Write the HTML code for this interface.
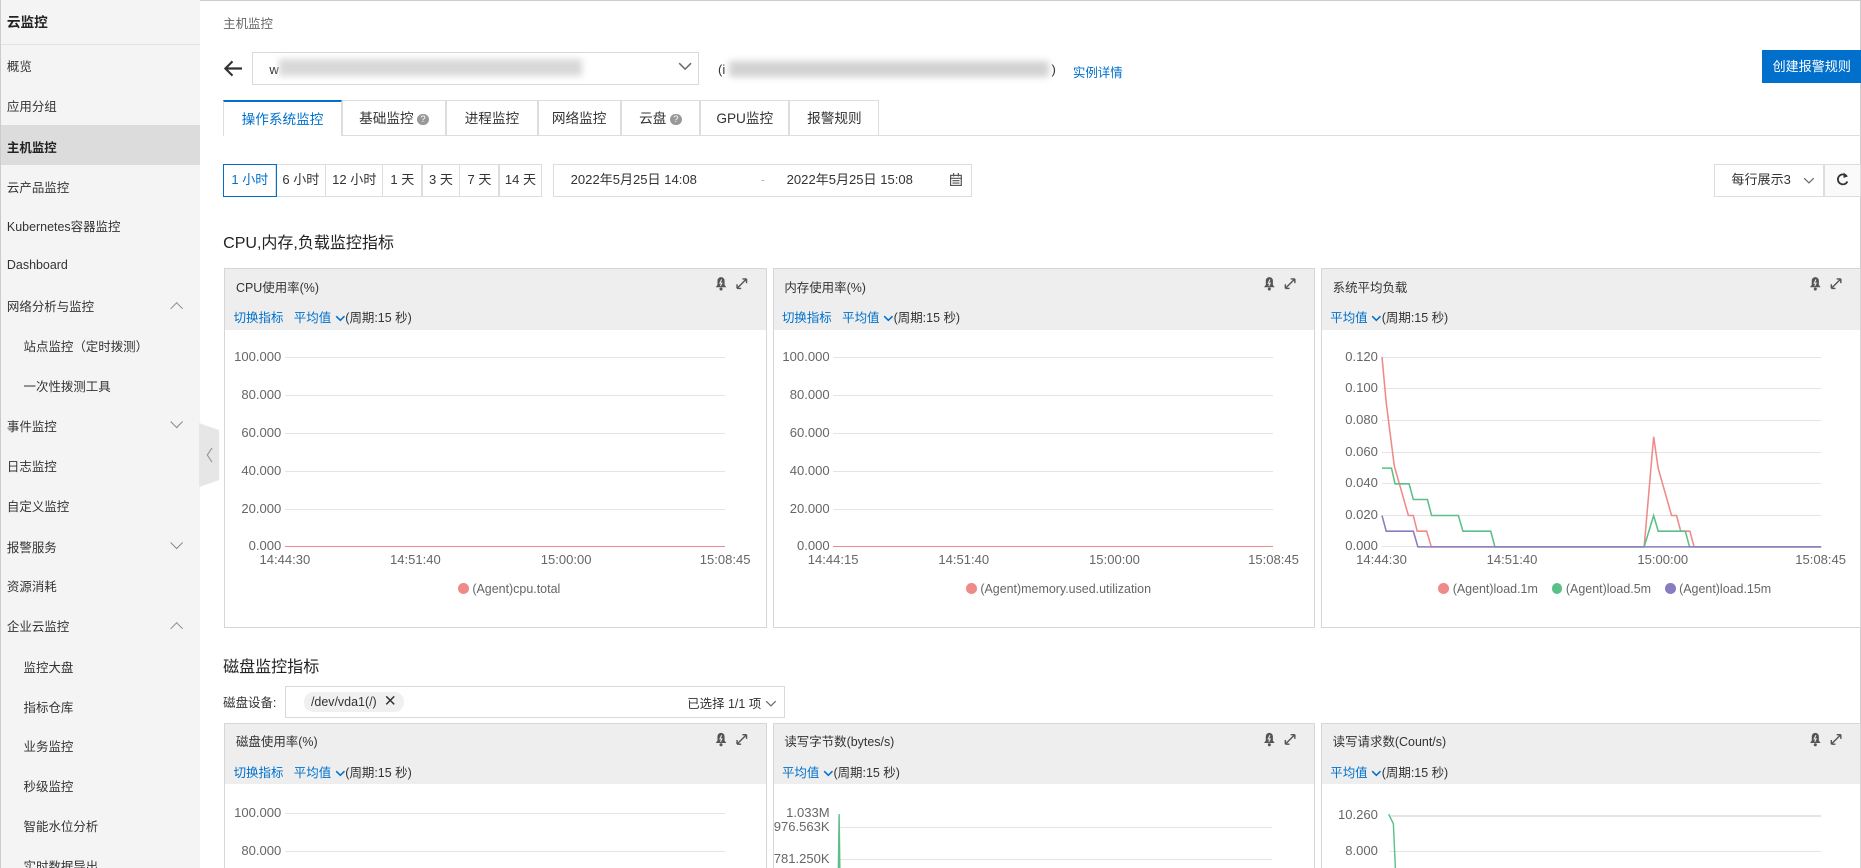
<!DOCTYPE html>
<html><head><meta charset="utf-8">
<style>
html{zoom:1.18686;overflow:hidden}
body{margin:0;background:#fff;font-family:"Liberation Sans","Noto Sans CJK SC",sans-serif;font-size:11px;color:#333}
#w{position:relative;width:1568px;height:731px;overflow:hidden}
.a{position:absolute;white-space:nowrap}
.side{position:absolute;left:0;top:0;width:168px;height:760px;background:#f4f4f4;border-left:1px solid #ccc}
.si{position:absolute;left:5px;font-size:10.5px;color:#333}
.sub{left:19px}
.chev{position:absolute;left:144px;width:7px;height:7px;border-left:1px solid #888;border-top:1px solid #888}
.up{transform:rotate(45deg)}
.dn{transform:rotate(225deg)}
.tab{position:absolute;top:84px;height:30px;border:1px solid #ddd;border-bottom:none;background:#fff;line-height:30px;text-align:center;font-size:11.5px;color:#333;box-sizing:border-box}
.q{display:inline-block;width:10px;height:10px;border-radius:50%;background:#999;color:#fff;font-size:8px;line-height:10px;text-align:center;vertical-align:1px;margin-left:3px}
.tb{position:absolute;top:138px;height:28px;border:1px solid #ddd;line-height:26px;text-align:center;font-size:11px;box-sizing:border-box;color:#333}
.panel{position:absolute;border:1px solid #d6d6d6;box-sizing:border-box;background:#fff}
.ph{position:absolute;left:0;top:0;right:0;height:51px;background:#eee}
.pt{position:absolute;left:9px;top:7px;font-size:10.5px;color:#333}
.pl{position:absolute;left:7px;top:33px;font-size:10.5px;color:#0070cc}
.pl span{color:#333}
.g{position:absolute;height:1px;background:#e4e4e4}
.yl{position:absolute;font-size:11px;color:#666;text-align:right;width:60px}
.xl{position:absolute;font-size:11px;color:#666;transform:translateX(-50%)}
.leg{position:absolute;font-size:10.5px;color:#666}
.dot{display:inline-block;width:9px;height:9px;border-radius:50%;vertical-align:-1px;margin-right:3px}
</style></head><body><div id="w">
<div class="a" style="left:0;top:0;width:1568px;height:1px;background:#ccc"></div>
<div class="a" style="left:1567px;top:0;width:1px;height:760px;background:#ccc"></div>
<div class="side">
<div class="si" style="top:9px;font-weight:bold;font-size:11.5px;color:#222">云监控</div>
<div class="a" style="left:0;top:37px;width:168px;height:1px;background:#e2e2e2"></div>
<div class="si" style="top:48px">概览</div>
<div class="si" style="top:82px">应用分组</div>
<div class="a" style="left:0;top:105px;width:168px;height:34px;background:#dcdcdc"></div>
<div class="si" style="top:116px;font-weight:bold;color:#222">主机监控</div>
<div class="si" style="top:150px">云产品监控</div>
<div class="si" style="top:183px">Kubernetes容器监控</div>
<div class="si" style="top:217px">Dashboard</div>
<div class="si" style="top:250px">网络分析与监控</div><div class="chev up" style="top:256px"></div>
<div class="si sub" style="top:284px">站点监控（定时拨测）</div>
<div class="si sub" style="top:318px">一次性拨测工具</div>
<div class="si" style="top:351px">事件监控</div><div class="chev dn" style="top:351px"></div>
<div class="si" style="top:385px">日志监控</div>
<div class="si" style="top:419px">自定义监控</div>
<div class="si" style="top:453px">报警服务</div><div class="chev dn" style="top:453px"></div>
<div class="si" style="top:486px">资源消耗</div>
<div class="si" style="top:520px">企业云监控</div><div class="chev up" style="top:526px"></div>
<div class="si sub" style="top:554px">监控大盘</div>
<div class="si sub" style="top:588px">指标仓库</div>
<div class="si sub" style="top:621px">业务监控</div>
<div class="si sub" style="top:655px">秒级监控</div>
<div class="si sub" style="top:688px">智能水位分析</div>
<div class="si sub" style="top:722px">实时数据导出</div>
</div>
<svg class="a" style="left:168px;top:356px" width="17" height="54"><polygon points="0,0 17,6 17,48 0,54" fill="#e6e6e6"/><polyline points="11,21 7,27 11,33" fill="none" stroke="#999" stroke-width="1"/></svg>

<div class="a" style="left:188px;top:12px;color:#666;font-size:10.5px">主机监控</div>
<svg class="a" style="left:188px;top:50px" width="18" height="16"><path d="M16 8H3M8 2L2 8l6 6" fill="none" stroke="#333" stroke-width="1.8"/></svg>
<div class="a" style="left:212px;top:44px;width:377px;height:28px;border:1px solid #d9d9d9;box-sizing:border-box"></div>
<div class="a" style="left:227px;top:52px;font-size:11px">w</div>
<div class="a" style="left:235px;top:50px;width:255px;height:14px;background:#d8d8d8;filter:blur(3px)"></div>
<svg class="a" style="left:571px;top:52px" width="12" height="8"><path d="M1 1l5 5 5-5" fill="none" stroke="#666" stroke-width="1.2"/></svg>
<div class="a" style="left:605px;top:52px;font-size:11px">(i</div>
<div class="a" style="left:614px;top:51px;width:270px;height:14px;background:#d2d2d2;filter:blur(3px)"></div>
<div class="a" style="left:886px;top:52px;font-size:11px">)</div>
<div class="a" style="left:904px;top:53px;font-size:10.5px;color:#0070cc">实例详情</div>
<div class="a" style="left:1485px;top:42px;width:83px;height:28px;background:#0070cc;color:#fff;font-size:11px;line-height:28px;text-align:center">创建报警规则</div>

<div class="a" style="left:188px;top:114px;width:1380px;height:1px;background:#ddd"></div>
<div class="tab" style="left:188px;width:100px;border-top:2px solid #0070cc;color:#0070cc;height:31px">操作系统监控</div>
<div class="tab" style="left:288px;width:88px">基础监控<span class="q">?</span></div>
<div class="tab" style="left:376px;width:77px">进程监控</div>
<div class="tab" style="left:453px;width:70px">网络监控</div>
<div class="tab" style="left:523px;width:67px">云盘<span class="q">?</span></div>
<div class="tab" style="left:590px;width:75px">GPU监控</div>
<div class="tab" style="left:665px;width:76px">报警规则</div>

<div class="tb" style="left:188px;width:45px;border-color:#0070cc;color:#0070cc;z-index:2">1 小时</div>
<div class="tb" style="left:232px;width:43px">6 小时</div>
<div class="tb" style="left:274px;width:49px">12 小时</div>
<div class="tb" style="left:322px;width:34px">1 天</div>
<div class="tb" style="left:355px;width:33px">3 天</div>
<div class="tb" style="left:387px;width:34px">7 天</div>
<div class="tb" style="left:420px;width:37px">14 天</div>
<div class="tb" style="left:466px;width:353px;text-align:left">
<span class="a" style="left:14px">2022年5月25日 14:08</span><span class="a" style="left:174px;color:#bbb">-</span><span class="a" style="left:196px">2022年5月25日 15:08</span>
<svg class="a" style="left:334px;top:7px" width="10" height="11"><rect x="0.5" y="2" width="9" height="8.5" fill="none" stroke="#555"/><path d="M0 4.5h10M3 0v3M7 0v3M2 6.5h6M2 8.5h6" stroke="#555" stroke-width="1"/></svg></div>
<div class="tb" style="left:1444px;width:93px;text-align:left;padding-left:14px">每行展示3<svg class="a" style="left:74px;top:10px" width="10" height="7"><path d="M1 1l4 4 4-4" fill="none" stroke="#666"/></svg></div>
<div class="tb" style="left:1537px;width:31px;background:#fafafa"><svg style="vertical-align:-2px" width="11" height="12"><path d="M9 3.5A4.2 4.2 0 1 0 9.6 8" fill="none" stroke="#333" stroke-width="1.5"/><path d="M6.5 0.5L10 3.8 6.3 5z" fill="#333"/></svg></div>

<div class="a" style="left:188px;top:193px;font-size:13.5px;color:#222">CPU,内存,负载监控指标</div>

<div class="panel" style="left:189px;top:226px;width:457px;height:303px">
<div class="ph"></div><div class="pt">CPU使用率(%)</div>
<div class="pl">切换指标&nbsp;&nbsp;&nbsp;平均值 <svg width="9" height="6"><path d="M1 1l3.5 3.5L8 1" fill="none" stroke="#0070cc" stroke-width="1.3"/></svg><span>(周期:15 秒)</span></div>
</div>
<div class="panel" style="left:651px;top:226px;width:457px;height:303px">
<div class="ph"></div><div class="pt">内存使用率(%)</div>
<div class="pl">切换指标&nbsp;&nbsp;&nbsp;平均值 <svg width="9" height="6"><path d="M1 1l3.5 3.5L8 1" fill="none" stroke="#0070cc" stroke-width="1.3"/></svg><span>(周期:15 秒)</span></div>
</div>
<div class="panel" style="left:1113px;top:226px;width:455px;height:303px">
<div class="ph"></div><div class="pt">系统平均负载</div>
<div class="pl">平均值 <svg width="9" height="6"><path d="M1 1l3.5 3.5L8 1" fill="none" stroke="#0070cc" stroke-width="1.3"/></svg><span>(周期:15 秒)</span></div>
</div>

<div class="a" style="left:188px;top:550px;font-size:13.5px;color:#222">磁盘监控指标</div>
<div class="a" style="left:188px;top:584px;font-size:10.5px">磁盘设备:</div>
<div class="a" style="left:240px;top:578px;width:421px;height:27px;border:1px solid #d9d9d9;box-sizing:border-box"></div>
<div class="a" style="left:256px;top:583px;height:17px;padding:0 6px;border-radius:8px;background:#f0f0f0;font-size:10.5px;line-height:17px;color:#333">/dev/vda1(/) <span style="font-size:13px;margin-left:3px">✕</span></div>
<div class="a" style="left:579px;top:585px;font-size:10.5px">已选择 1/1 项 <svg width="10" height="7"><path d="M1 1l4 4 4-4" fill="none" stroke="#666"/></svg></div>

<div class="panel" style="left:189px;top:609px;width:457px;height:160px">
<div class="ph"></div><div class="pt">磁盘使用率(%)</div>
<div class="pl">切换指标&nbsp;&nbsp;&nbsp;平均值 <svg width="9" height="6"><path d="M1 1l3.5 3.5L8 1" fill="none" stroke="#0070cc" stroke-width="1.3"/></svg><span>(周期:15 秒)</span></div>
</div>
<div class="panel" style="left:651px;top:609px;width:457px;height:160px">
<div class="ph"></div><div class="pt">读写字节数(bytes/s)</div>
<div class="pl">平均值 <svg width="9" height="6"><path d="M1 1l3.5 3.5L8 1" fill="none" stroke="#0070cc" stroke-width="1.3"/></svg><span>(周期:15 秒)</span></div>
</div>
<div class="panel" style="left:1113px;top:609px;width:455px;height:160px">
<div class="ph"></div><div class="pt">读写请求数(Count/s)</div>
<div class="pl">平均值 <svg width="9" height="6"><path d="M1 1l3.5 3.5L8 1" fill="none" stroke="#0070cc" stroke-width="1.3"/></svg><span>(周期:15 秒)</span></div>
</div>

<svg class="a" style="left:0;top:0;pointer-events:none" width="1568" height="731">
<defs><g id="icons">
<path d="M0 9 L1.5 7 L1.5 3.5 A3 3 0 0 1 7.5 3.5 L7.5 7 L9 9 Z" fill="#555"/><circle cx="4.5" cy="10.5" r="1.3" fill="#555"/><path d="M5 2.5 L3.6 5.6 L5.2 5.6 L4 8" stroke="#eee" stroke-width="0.9" fill="none"/>
<path d="M18 10 L26 2 M18 10 v-3.5 M18 10 h3.5 M26 2 v3.5 M26 2 h-3.5" stroke="#555" stroke-width="1.2" fill="none"/>
</g></defs>
<use href="#icons" x="603" y="233"/><use href="#icons" x="1065" y="233"/><use href="#icons" x="1525" y="233"/>
<use href="#icons" x="603" y="617"/><use href="#icons" x="1065" y="617"/><use href="#icons" x="1525" y="617"/>
</svg>

<div class="g" style="left:240px;top:301px;width:371px"></div><div class="g" style="left:240px;top:333px;width:371px"></div><div class="g" style="left:240px;top:365px;width:371px"></div><div class="g" style="left:240px;top:397px;width:371px"></div><div class="g" style="left:240px;top:429px;width:371px"></div>
<div class="g" style="left:240px;top:460px;width:371px;background:#ee8a88"></div>
<div class="yl" style="left:177px;top:294px">100.000</div><div class="yl" style="left:177px;top:326px">80.000</div><div class="yl" style="left:177px;top:358px">60.000</div><div class="yl" style="left:177px;top:390px">40.000</div><div class="yl" style="left:177px;top:422px">20.000</div><div class="yl" style="left:177px;top:453px">0.000</div>
<div class="xl" style="left:240px;top:465px">14:44:30</div><div class="xl" style="left:350px;top:465px">14:51:40</div><div class="xl" style="left:477px;top:465px">15:00:00</div><div class="xl" style="left:611px;top:465px">15:08:45</div>
<div class="leg" style="left:386px;top:490px"><span class="dot" style="background:#ee8a88"></span>(Agent)cpu.total</div>

<div class="g" style="left:702px;top:301px;width:371px"></div><div class="g" style="left:702px;top:333px;width:371px"></div><div class="g" style="left:702px;top:365px;width:371px"></div><div class="g" style="left:702px;top:397px;width:371px"></div><div class="g" style="left:702px;top:429px;width:371px"></div>
<div class="g" style="left:702px;top:460px;width:371px;background:#ee8a88"></div>
<div class="yl" style="left:639px;top:294px">100.000</div><div class="yl" style="left:639px;top:326px">80.000</div><div class="yl" style="left:639px;top:358px">60.000</div><div class="yl" style="left:639px;top:390px">40.000</div><div class="yl" style="left:639px;top:422px">20.000</div><div class="yl" style="left:639px;top:453px">0.000</div>
<div class="xl" style="left:702px;top:465px">14:44:15</div><div class="xl" style="left:812px;top:465px">14:51:40</div><div class="xl" style="left:939px;top:465px">15:00:00</div><div class="xl" style="left:1073px;top:465px">15:08:45</div>
<div class="leg" style="left:814px;top:490px"><span class="dot" style="background:#ee8a88"></span>(Agent)memory.used.utilization</div>

<div class="g" style="left:1164px;top:301px;width:370px"></div><div class="g" style="left:1164px;top:327px;width:370px"></div><div class="g" style="left:1164px;top:354px;width:370px"></div><div class="g" style="left:1164px;top:381px;width:370px"></div><div class="g" style="left:1164px;top:407px;width:370px"></div><div class="g" style="left:1164px;top:434px;width:370px"></div><div class="g" style="left:1164px;top:460px;width:370px"></div>
<div class="yl" style="left:1101px;top:294px">0.120</div><div class="yl" style="left:1101px;top:320px">0.100</div><div class="yl" style="left:1101px;top:347px">0.080</div><div class="yl" style="left:1101px;top:374px">0.060</div><div class="yl" style="left:1101px;top:400px">0.040</div><div class="yl" style="left:1101px;top:427px">0.020</div><div class="yl" style="left:1101px;top:453px">0.000</div>
<div class="xl" style="left:1164px;top:465px">14:44:30</div><div class="xl" style="left:1274px;top:465px">14:51:40</div><div class="xl" style="left:1401px;top:465px">15:00:00</div><div class="xl" style="left:1534px;top:465px">15:08:45</div>
<svg class="a" style="left:1164px;top:301px;overflow:visible" width="370" height="160" viewBox="203 293 1248 569" preserveAspectRatio="none">
<polyline vector-effect="non-scaling-stroke" fill="none" stroke="#ee8a88" stroke-width="1.3" points="203,293 215,430 238,620 278,768 292,768 303,815 330,815 343,862 948,862 975,532 988,627 1026,768 1040,768 1052,815 1078,815 1090,862 1451,862"/>
<polyline vector-effect="non-scaling-stroke" fill="none" stroke="#5bbf88" stroke-width="1.3" points="203,626 230,626 240,673 280,673 292,720 332,720 344,768 420,768 433,815 512,815 524,862 948,862 975,768 988,815 1065,815 1077,862 1451,862"/>
<polyline vector-effect="non-scaling-stroke" fill="none" stroke="#8a7cc0" stroke-width="1.3" points="203,768 215,815 292,815 305,862 1451,862"/>
</svg>
<div class="leg" style="left:1212px;top:490px"><span class="dot" style="background:#ee8a88"></span>(Agent)load.1m&nbsp;&nbsp;&nbsp;&nbsp;<span class="dot" style="background:#5bbf88"></span>(Agent)load.5m&nbsp;&nbsp;&nbsp;&nbsp;<span class="dot" style="background:#8a7cc0"></span>(Agent)load.15m</div>

<div class="g" style="left:240px;top:685px;width:371px"></div><div class="g" style="left:240px;top:717px;width:371px"></div>
<div class="yl" style="left:177px;top:678px">100.000</div><div class="yl" style="left:177px;top:710px">80.000</div>
<div class="g" style="left:708px;top:697px;width:364px"></div><div class="g" style="left:708px;top:724px;width:364px"></div>
<div class="yl" style="left:639px;top:678px">1.033M</div><div class="yl" style="left:639px;top:690px">976.563K</div><div class="yl" style="left:639px;top:717px">781.250K</div>
<div class="g" style="left:1170px;top:687px;width:364px"></div><div class="g" style="left:1170px;top:717px;width:364px"></div>
<div class="yl" style="left:1101px;top:680px">10.260</div><div class="yl" style="left:1101px;top:710px">8.000</div>
<svg class="a" style="left:0;top:0" width="1568" height="760"><polyline points="706,760 707,686 708,760" fill="none" stroke="#5bbf88" stroke-width="1.2"/><polyline points="1170,686 1174,694 1177,760" fill="none" stroke="#5bbf88" stroke-width="1.2"/></svg>
</div></body></html>
